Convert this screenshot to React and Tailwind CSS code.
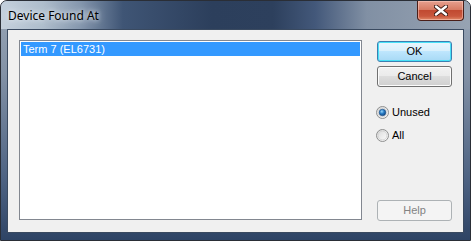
import React from "react";

function RadioMark({ checked }) {
  return (
    <svg width="13" height="13" viewBox="0 0 13 13" className="shrink-0">
      <defs>
        <linearGradient id={checked ? "rb1" : "rb0"} x1="0" y1="0" x2="1" y2="1">
          <stop offset="0" stopColor="#d8d8d8" />
          <stop offset="1" stopColor="#ffffff" />
        </linearGradient>
        <radialGradient id="dot" cx="0.4" cy="0.35" r="0.7">
          <stop offset="0" stopColor="#9ad6f8" />
          <stop offset="0.45" stopColor="#2b7fc8" />
          <stop offset="1" stopColor="#0d3f7a" />
        </radialGradient>
      </defs>
      <circle cx="6.5" cy="6.5" r="6" fill={checked ? "url(#rb1)" : "url(#rb0)"} stroke="#8e8f8f" strokeWidth="1" />
      <circle cx="6.5" cy="6.5" r="4.4" fill="none" stroke="#cfcfcf" strokeWidth="0.8" />
      {checked && <circle cx="6.5" cy="6.5" r="3.3" fill="url(#dot)" stroke="#1c4f86" strokeWidth="0.6" />}
    </svg>
  );
}

function App() {
  const font = { fontFamily: '"Liberation Sans", Arial, sans-serif' };

  return (
    <div className="w-[471px] h-[241px] bg-white">
      <div className="w-[471px] h-[241px] flex flex-col rounded-t-[7px] border border-[#2a2e36] overflow-hidden bg-[linear-gradient(to_bottom,#9aa7b7_0%,#8392a6_30%,#4d6282_75%,#2e4465_100%)]">
        {/* title bar */}
        <div className="h-[28px] shrink-0 flex items-start justify-between bg-[linear-gradient(to_right,#c4d0dc_0%,#aebdcc_9%,#8496ad_17%,#3f5575_26%,#2c3f5c_45%,#2d405d_58%,#43587a_67%,#8190a4_78%,#97a3b2_100%)]">
          <span
            className="pl-[7px] pt-[7px] text-[12px] text-black leading-[16px]"
            style={{ fontFamily: '"Noto Sans", "Open Sans", sans-serif', textShadow: "0 0 8px #e8eef4, 0 0 4px #e8eef4" }}
          >
            Device Found At
          </span>
          <div className="mr-[6px] w-[47px] h-[20px] rounded-b-[4px] border border-t-0 border-[#4a1e18] bg-[linear-gradient(to_bottom,#e6a08f_0%,#d77b64_45%,#c14a31_50%,#c9573d_80%,#e08a68_100%)] flex items-center justify-center shadow-[inset_0_0_0_1px_rgba(255,210,200,0.5)]">
            <svg width="14" height="11" viewBox="0 0 14 11">
              <path d="M2 1.5 L12 9.5 M12 1.5 L2 9.5" stroke="#3b1a14" strokeWidth="4.2" strokeLinecap="round" />
              <path d="M2 1.5 L12 9.5 M12 1.5 L2 9.5" stroke="#ffffff" strokeWidth="2.4" strokeLinecap="round" />
            </svg>
          </div>
        </div>

        {/* client area */}
        <div className="flex-1 ml-[6px] mr-[6px] mb-[7px] border border-[#3a4a60] bg-[#f0f0f0] flex items-start pl-[11px] pt-[10px]" style={font}>
          <div className="w-[343px] h-[180px] border border-[#828790] bg-white p-[1px]">
            <div className="h-[14px] pl-[2px] bg-[#3399ff] text-white text-[11px] leading-[14px]">
              Term 7 (EL6731)
            </div>
          </div>

          <div className="ml-[15px] w-[75px] h-[181px] flex flex-col text-[11px]">
            <button className="mt-[1px] h-[21px] w-[75px] rounded-[3px] border border-[#3c7fb1] bg-[linear-gradient(to_bottom,#eaf6fd_0%,#d9f0fc_45%,#bee6fd_50%,#a7d9f5_100%)] shadow-[inset_0_0_0_1px_#48e1f7] text-black text-[11px] leading-[19px]">
              OK
            </button>
            <button className="mt-[4px] h-[21px] w-[75px] rounded-[3px] border border-[#707070] bg-[linear-gradient(to_bottom,#f2f2f2_0%,#ebebeb_45%,#dddddd_50%,#cfcfcf_100%)] shadow-[inset_0_0_0_1px_#fcfcfc] text-black text-[11px] leading-[19px]">
              Cancel
            </button>
            <div className="mt-[18px] flex items-center h-[14px] text-black">
              <div className="ml-[-1px]"><RadioMark checked /></div>
              <span className="ml-[3px] leading-[14px]">Unused</span>
            </div>
            <div className="mt-[9px] flex items-center h-[14px] text-black">
              <div className="ml-[-1px]"><RadioMark checked={false} /></div>
              <span className="ml-[3px] leading-[14px]">All</span>
            </div>
            <button className="mt-auto h-[21px] w-[75px] rounded-[3px] border border-[#adb2b5] bg-[#f4f4f4] text-[#838383] text-[11px] leading-[19px]">
              Help
            </button>
          </div>
        </div>
      </div>
    </div>
  );
}

export default App;
